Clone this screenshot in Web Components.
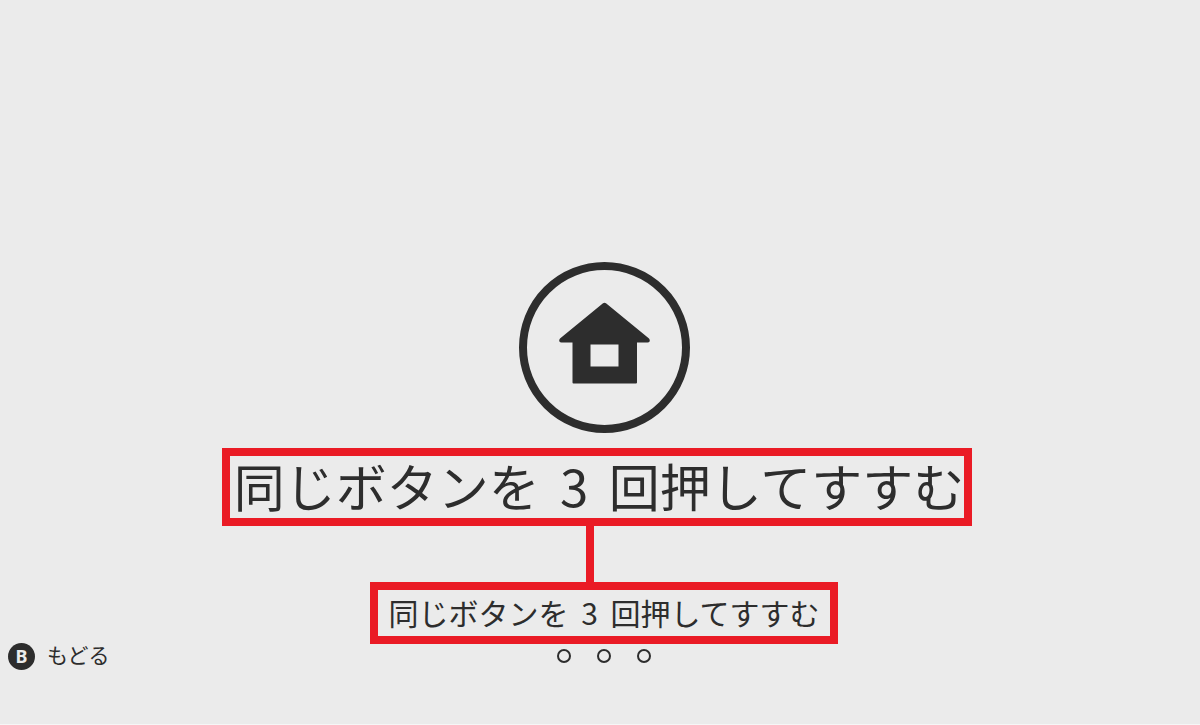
<!DOCTYPE html>
<html lang="ja">
<head>
  <meta charset="utf-8">
  <meta name="viewport" content="width=device-width, initial-scale=1">
  <title>同じボタンを 3 回押してすすむ</title>
  <style>
    body {
      margin: 0;
      color: #2d2d2d;
      background: #ebebeb;
      font-family: "Noto Sans CJK JP", "Noto Sans", sans-serif;
    }
  </style>
</head>
<body>
  <unlock-screen>
    <home-icon></home-icon>
    <call-out size="large">同じボタンを <span>3</span> 回押してすすむ</call-out>
    <call-out-line></call-out-line>
    <call-out>同じボタンを <span>3</span> 回押してすすむ</call-out>
    <key-hint slot="hint" key="B">もどる</key-hint>
    <press-dots slot="progress" count="3"></press-dots>
  </unlock-screen>

  <script>
    class UnlockScreen extends HTMLElement {
      constructor() {
        super();
        this.attachShadow({ mode: 'open' });
      }

      connectedCallback() {
        this.shadowRoot.innerHTML = `
          <style>
            :host {
              display: flex;
              flex-direction: column;
              box-sizing: border-box;
              min-height: 100vh;
              padding: 0 0 56px 8px;
              border-bottom: 1px solid #f6f6f6;
            }
            main {
              flex: 1;
              display: flex;
              flex-direction: column;
              align-items: center;
              justify-content: flex-end;
            }
            footer {
              display: grid;
              grid-template-columns: 1fr auto 1fr;
              grid-template-rows: 24px;
              align-items: center;
            }
          </style>
          <main><slot></slot></main>
          <footer>
            <slot name="hint"></slot>
            <slot name="progress"></slot>
          </footer>
        `;
      }
    }

    class HomeIcon extends HTMLElement {
      constructor() {
        super();
        this.attachShadow({ mode: 'open' });
      }

      connectedCallback() {
        this.shadowRoot.innerHTML = `
          <style>
            :host {
              display: block;
              margin-bottom: 15px;
            }
            svg {
              display: block;
              width: 171px;
              height: 171px;
            }
          </style>
          <svg viewBox="0 0 171 171" role="img" aria-label="HOME">
            <circle cx="85.5" cy="85.5" r="81.5" fill="none" stroke="currentColor" stroke-width="8"/>
            <path fill="currentColor" fill-rule="evenodd" d="M84 41.200q1.500-1 3 0L130 76.500q1.300 1.600.600 3-.600.900-2 .900H118V120.500q0 1-1 1H54.500q-1 0-1-1V80.400H42.400q-1.400 0-2-.900-.700-1.400.600-3ZM71.500 82.500v22h28v-22Z"/>
          </svg>
        `;
      }
    }

    class CallOut extends HTMLElement {
      constructor() {
        super();
        this.attachShadow({ mode: 'open' });
      }

      connectedCallback() {
        this.shadowRoot.innerHTML = `
          <style>
            :host {
              display: block;
              padding: 0 10px 2px;
              border: 8px solid #ea1b25;
              font-size: 30px;
              line-height: 44px;
              white-space: nowrap;
            }
            :host([size="large"]) {
              margin-right: 14px;
              padding: 0 0 4px 4px;
              font-size: 51px;
              line-height: 58px;
            }
            ::slotted(span) {
              padding: 0 6px;
            }
            :host([size="large"]) ::slotted(span) {
              padding: 0 9px;
            }
          </style>
          <slot></slot>
        `;
      }
    }

    class CallOutLine extends HTMLElement {
      constructor() {
        super();
        this.attachShadow({ mode: 'open' });
      }

      connectedCallback() {
        this.shadowRoot.innerHTML = `
          <style>
            :host {
              display: block;
              width: 8px;
              height: 56px;
              margin-right: 28px;
              background: #ea1b25;
            }
          </style>
        `;
      }
    }

    class KeyHint extends HTMLElement {
      constructor() {
        super();
        this.attachShadow({ mode: 'open' });
      }

      connectedCallback() {
        this.shadowRoot.innerHTML = `
          <style>
            :host {
              display: block;
            }
            button {
              display: flex;
              align-items: center;
              gap: 12px;
              padding: 0;
              border: 0;
              background: none;
              color: inherit;
              font: inherit;
              font-size: 21px;
              line-height: 24px;
              cursor: pointer;
            }
            .key {
              width: 27px;
              border-radius: 50%;
              background: #2d2d2d;
              color: #ebebeb;
              font-family: "Noto Sans", sans-serif;
              font-size: 18px;
              font-weight: 700;
              line-height: 27px;
              text-align: center;
            }
            .label {
              padding-bottom: 4px;
            }
          </style>
          <button type="button">
            <span class="key">${this.getAttribute('key')}</span>
            <span class="label"><slot></slot></span>
          </button>
        `;
      }
    }

    class PressDots extends HTMLElement {
      constructor() {
        super();
        this.attachShadow({ mode: 'open' });
      }

      connectedCallback() {
        const count = Number(this.getAttribute('count'));
        this.shadowRoot.innerHTML = `
          <style>
            :host {
              display: flex;
              gap: 26px;
            }
            i {
              box-sizing: border-box;
              width: 14px;
              height: 14px;
              border: 2px solid #2d2d2d;
              border-radius: 50%;
            }
          </style>
          ${'<i></i>'.repeat(count)}
        `;
      }
    }

    customElements.define('unlock-screen', UnlockScreen);
    customElements.define('home-icon', HomeIcon);
    customElements.define('call-out', CallOut);
    customElements.define('call-out-line', CallOutLine);
    customElements.define('key-hint', KeyHint);
    customElements.define('press-dots', PressDots);
  </script>
</body>
</html>
